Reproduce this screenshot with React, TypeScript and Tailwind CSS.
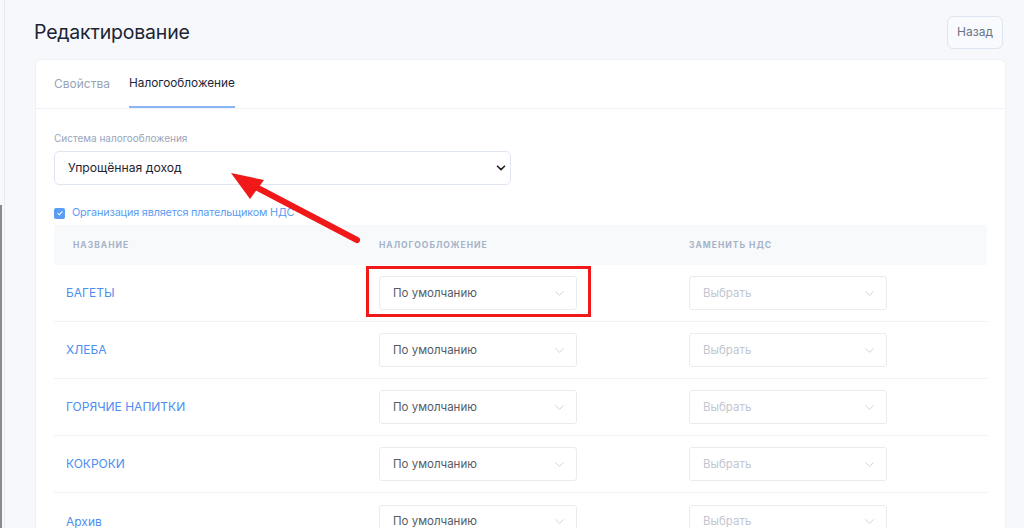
import React from 'react';
import { ChevronDown } from 'lucide-react';

const rows = ['БАГЕТЫ', 'ХЛЕБА', 'ГОРЯЧИЕ НАПИТКИ', 'КОКРОКИ', 'Архив'];

const SmallSelect: React.FC<{ value: string; placeholder?: boolean }> = ({ value, placeholder }) => (
  <div className="w-[198px] h-[34px] flex items-center justify-between pl-[13px] pr-[9px] bg-white border border-[#e8ebf0] rounded-[3px]">
    <span className={placeholder ? 'text-[11.5px] text-[#c3c7cf]' : 'text-[11.5px] text-[#555b66]'}>{value}</span>
    <ChevronDown className="w-[15px] h-[15px] text-[#c8ccd3]" strokeWidth={1.4} />
  </div>
);

export default function App() {
  return (
    <div className="relative w-[1024px] h-[528px] overflow-hidden bg-[#f6f8fb] font-['Inter','Liberation_Sans',sans-serif]">
      {/* left window edges */}
      <div className="absolute left-[4px] top-0 bottom-0 w-px bg-[#e6ebf3]" />
      <div className="absolute left-0 top-[205px] bottom-0 w-[2px] bg-[#8a8a8a]" />

      <div className="pl-[35px] pr-[18px]">
        <div className="h-[59px] flex items-center justify-between">
          <h1 className="text-[19.5px] leading-none text-[#1b2433] tracking-[-0.2px] mt-[6px] -ml-[1px]">Редактирование</h1>
          <button className="h-[33px] w-[56px] mt-[5px] mr-[3px] border border-[#dde5f1] rounded-[6px] bg-[#f8fafd] text-[12px] text-[#6b7485]">
            Назад
          </button>
        </div>

        <div className="bg-white rounded-t-[6px] border border-[#eef1f6] border-b-0 h-[480px]">
          <div className="flex gap-[19px] px-[18px] h-[49px] border-b border-[#eef1f6]">
            <div className="flex items-center text-[12px] text-[#99a4b8]">Свойства</div>
            <div className="flex items-center text-[11.8px] text-[#1d2636] border-b-2 border-[#8ab6f5] pt-[2px]">Налогообложение</div>
          </div>

          <div className="px-[18px] pt-[24px]">
            <div className="text-[10px] text-[#9aa6ba] leading-none">Система налогообложения</div>
            <div className="mt-[8px] w-[457px] h-[34px] flex items-center justify-between pl-[13px] pr-[3px] border border-[#dfe6f0] rounded-[5px]">
              <span className="text-[12.2px] text-[#1f2530]">Упрощённая доход</span>
              <svg width="10" height="6" viewBox="0 0 10 6" className="mr-[1px]">
                <path d="M1.5 1.2 L5 4.6 L8.5 1.2" fill="none" stroke="#222" strokeWidth="1.6" strokeLinecap="round" strokeLinejoin="round" />
              </svg>
            </div>

            <div className="mt-[20px] flex items-center gap-[7px]">
              <div className="w-[11px] h-[11px] rounded-[2px] bg-[#5b9cf4] flex items-center justify-center">
                <svg width="8" height="8" viewBox="0 0 8 8">
                  <path d="M1.6 4.2 L3.3 5.8 L6.4 2.3" fill="none" stroke="#fff" strokeWidth="1.1" />
                </svg>
              </div>
              <span className="text-[10.8px] tracking-[-0.15px] text-[#5b9cf4]">Организация является плательщиком НДС</span>
            </div>

            <div className="mt-[4px] w-[933px]">
              <div className="grid grid-cols-[325px_310px_1fr] h-[40px] items-center bg-[#f8f9fb] text-[8.5px] font-bold tracking-[1px] text-[#a5b3c8]">
                <div className="pl-[19px]">НАЗВАНИЕ</div>
                <div>НАЛОГООБЛОЖЕНИЕ</div>
                <div>ЗАМЕНИТЬ НДС</div>
              </div>
              {rows.map((name, i) => (
                <div
                  key={name}
                  className={
                    i < rows.length - 1
                      ? 'grid grid-cols-[325px_310px_1fr] h-[57px] items-center border-b border-[#eef1f5]'
                      : 'grid grid-cols-[325px_310px_1fr] h-[57px] items-center'
                  }
                >
                  <div className="pl-[12px] text-[12px] text-[#4d8ef0]">{name}</div>
                  <div>
                    <SmallSelect value="По умолчанию" />
                  </div>
                  <div>
                    <SmallSelect value="Выбрать" placeholder />
                  </div>
                </div>
              ))}
            </div>
          </div>
        </div>
      </div>

      {/* annotations */}
      <div className="absolute left-[366px] top-[266px] w-[225px] h-[51px] border-[3px] border-[#f01818]" />
      <svg className="absolute left-0 top-0 pointer-events-none" width="1024" height="528">
        <line x1="357" y1="240" x2="254" y2="186" stroke="#f01818" strokeWidth="6" strokeLinecap="round" />
        <polygon points="231,173 264,180 250,199" fill="#f01818" />
      </svg>
    </div>
  );
}
